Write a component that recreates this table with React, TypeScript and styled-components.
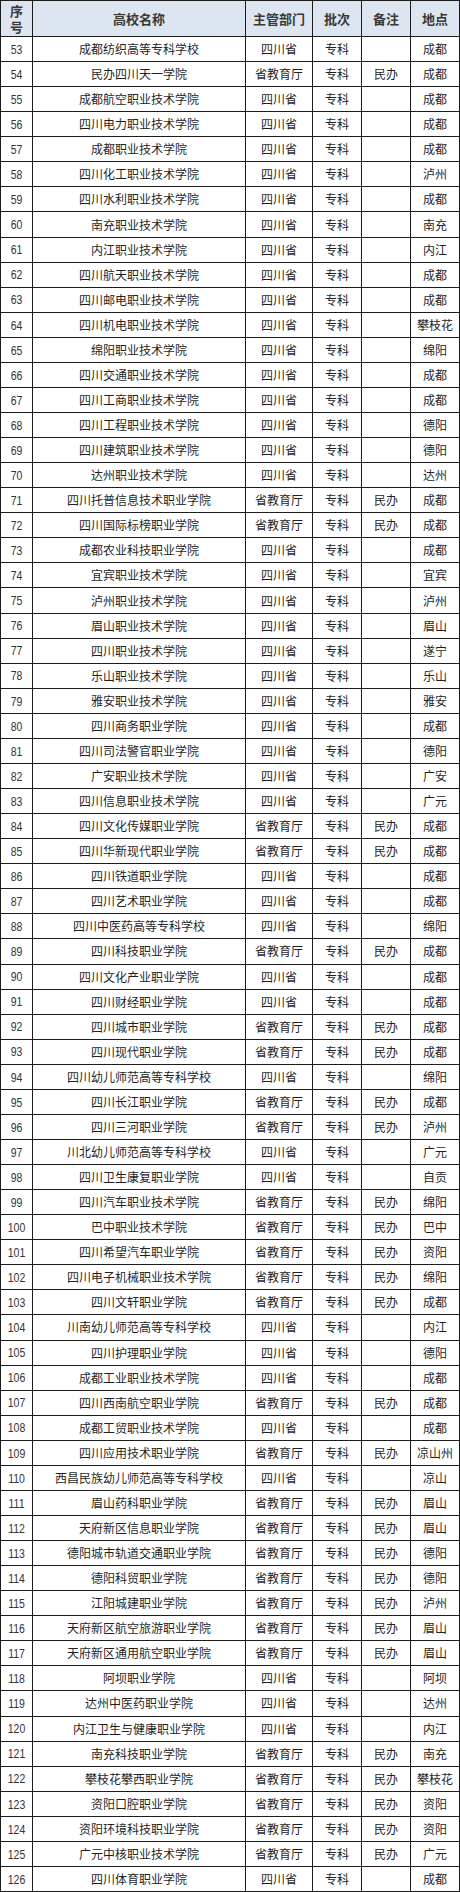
import React from 'react'
import styled, { createGlobalStyle } from 'styled-components'

type School = [number, string, string, boolean]

// [序号, 高校名称, 地点, 民办]
const schools: School[] = [
	[53, '成都纺织高等专科学校', '成都', false],
	[54, '民办四川天一学院', '成都', true],
	[55, '成都航空职业技术学院', '成都', false],
	[56, '四川电力职业技术学院', '成都', false],
	[57, '成都职业技术学院', '成都', false],
	[58, '四川化工职业技术学院', '泸州', false],
	[59, '四川水利职业技术学院', '成都', false],
	[60, '南充职业技术学院', '南充', false],
	[61, '内江职业技术学院', '内江', false],
	[62, '四川航天职业技术学院', '成都', false],
	[63, '四川邮电职业技术学院', '成都', false],
	[64, '四川机电职业技术学院', '攀枝花', false],
	[65, '绵阳职业技术学院', '绵阳', false],
	[66, '四川交通职业技术学院', '成都', false],
	[67, '四川工商职业技术学院', '成都', false],
	[68, '四川工程职业技术学院', '德阳', false],
	[69, '四川建筑职业技术学院', '德阳', false],
	[70, '达州职业技术学院', '达州', false],
	[71, '四川托普信息技术职业学院', '成都', true],
	[72, '四川国际标榜职业学院', '成都', true],
	[73, '成都农业科技职业学院', '成都', false],
	[74, '宜宾职业技术学院', '宜宾', false],
	[75, '泸州职业技术学院', '泸州', false],
	[76, '眉山职业技术学院', '眉山', false],
	[77, '四川职业技术学院', '遂宁', false],
	[78, '乐山职业技术学院', '乐山', false],
	[79, '雅安职业技术学院', '雅安', false],
	[80, '四川商务职业学院', '成都', false],
	[81, '四川司法警官职业学院', '德阳', false],
	[82, '广安职业技术学院', '广安', false],
	[83, '四川信息职业技术学院', '广元', false],
	[84, '四川文化传媒职业学院', '成都', true],
	[85, '四川华新现代职业学院', '成都', true],
	[86, '四川铁道职业学院', '成都', false],
	[87, '四川艺术职业学院', '成都', false],
	[88, '四川中医药高等专科学校', '绵阳', false],
	[89, '四川科技职业学院', '成都', true],
	[90, '四川文化产业职业学院', '成都', false],
	[91, '四川财经职业学院', '成都', false],
	[92, '四川城市职业学院', '成都', true],
	[93, '四川现代职业学院', '成都', true],
	[94, '四川幼儿师范高等专科学校', '绵阳', false],
	[95, '四川长江职业学院', '成都', true],
	[96, '四川三河职业学院', '泸州', true],
	[97, '川北幼儿师范高等专科学校', '广元', false],
	[98, '四川卫生康复职业学院', '自贡', false],
	[99, '四川汽车职业技术学院', '绵阳', true],
	[100, '巴中职业技术学院', '巴中', true],
	[101, '四川希望汽车职业学院', '资阳', true],
	[102, '四川电子机械职业技术学院', '绵阳', true],
	[103, '四川文轩职业学院', '成都', true],
	[104, '川南幼儿师范高等专科学校', '内江', false],
	[105, '四川护理职业学院', '德阳', false],
	[106, '成都工业职业技术学院', '成都', false],
	[107, '四川西南航空职业学院', '成都', true],
	[108, '成都工贸职业技术学院', '成都', false],
	[109, '四川应用技术职业学院', '凉山州', true],
	[110, '西昌民族幼儿师范高等专科学校', '凉山', false],
	[111, '眉山药科职业学院', '眉山', true],
	[112, '天府新区信息职业学院', '眉山', true],
	[113, '德阳城市轨道交通职业学院', '德阳', true],
	[114, '德阳科贸职业学院', '德阳', true],
	[115, '江阳城建职业学院', '泸州', true],
	[116, '天府新区航空旅游职业学院', '眉山', true],
	[117, '天府新区通用航空职业学院', '眉山', true],
	[118, '阿坝职业学院', '阿坝', false],
	[119, '达州中医药职业学院', '达州', false],
	[120, '内江卫生与健康职业学院', '内江', false],
	[121, '南充科技职业学院', '南充', true],
	[122, '攀枝花攀西职业学院', '攀枝花', true],
	[123, '资阳口腔职业学院', '资阳', true],
	[124, '资阳环境科技职业学院', '资阳', true],
	[125, '广元中核职业技术学院', '广元', true],
	[126, '四川体育职业学院', '成都', false],
]

const GlobalStyle = createGlobalStyle`
	html, body {
		margin: 0;
		padding: 0;
		background: #ffffff;
	}
	body {
		font-family: "Noto Sans CJK SC", "Noto Sans", sans-serif;
	}
`

export default function App() {
	return (
		<>
			<GlobalStyle />
			<Sheet>
				<HeadCell>
					<SerialHead>
						序<br />号
					</SerialHead>
				</HeadCell>
				<HeadCell>高校名称</HeadCell>
				<HeadCell>主管部门</HeadCell>
				<HeadCell>批次</HeadCell>
				<HeadCell>备注</HeadCell>
				<HeadCell>地点</HeadCell>

				{schools.map(([no, name, city, isPrivate]) => (
					<React.Fragment key={no}>
						<Cell>
							<Serial>{no}</Serial>
						</Cell>
						<Cell>{name}</Cell>
						<Cell>{isPrivate ? '省教育厅' : '四川省'}</Cell>
						<Cell>专科</Cell>
						<Cell>{isPrivate ? '民办' : ''}</Cell>
						<Cell>{city}</Cell>
					</React.Fragment>
				))}
			</Sheet>
		</>
	)
}

const Sheet = styled.div`
	width: 460px;
	height: 1892px;
	box-sizing: border-box;
	display: grid;
	grid-template-columns: 31px 212px 66px 48px 48px 1fr;
	grid-template-rows: 35px repeat(74, 1fr);
	gap: 1px;
	padding: 1px;
	background: #1c1c1c;
`

const HeadCell = styled.div`
	display: flex;
	align-items: center;
	justify-content: center;
	background: #dde5f0;
	color: #383838;
	font-size: 13px;
	font-weight: 700;
	white-space: nowrap;
`

const SerialHead = styled.span`
	line-height: 16px;
	text-align: center;
`

const Cell = styled.div`
	display: flex;
	align-items: center;
	justify-content: center;
	background: #ffffff;
	color: #1f1f1f;
	font-size: 12px;
	line-height: 1;
	white-space: nowrap;
	overflow: hidden;
`

const Serial = styled.span`
	display: inline-block;
	font-family: "Liberation Sans", Arial, sans-serif;
	font-size: 10.5px;
	color: #333333;
	transform: scaleY(1.2);
`
